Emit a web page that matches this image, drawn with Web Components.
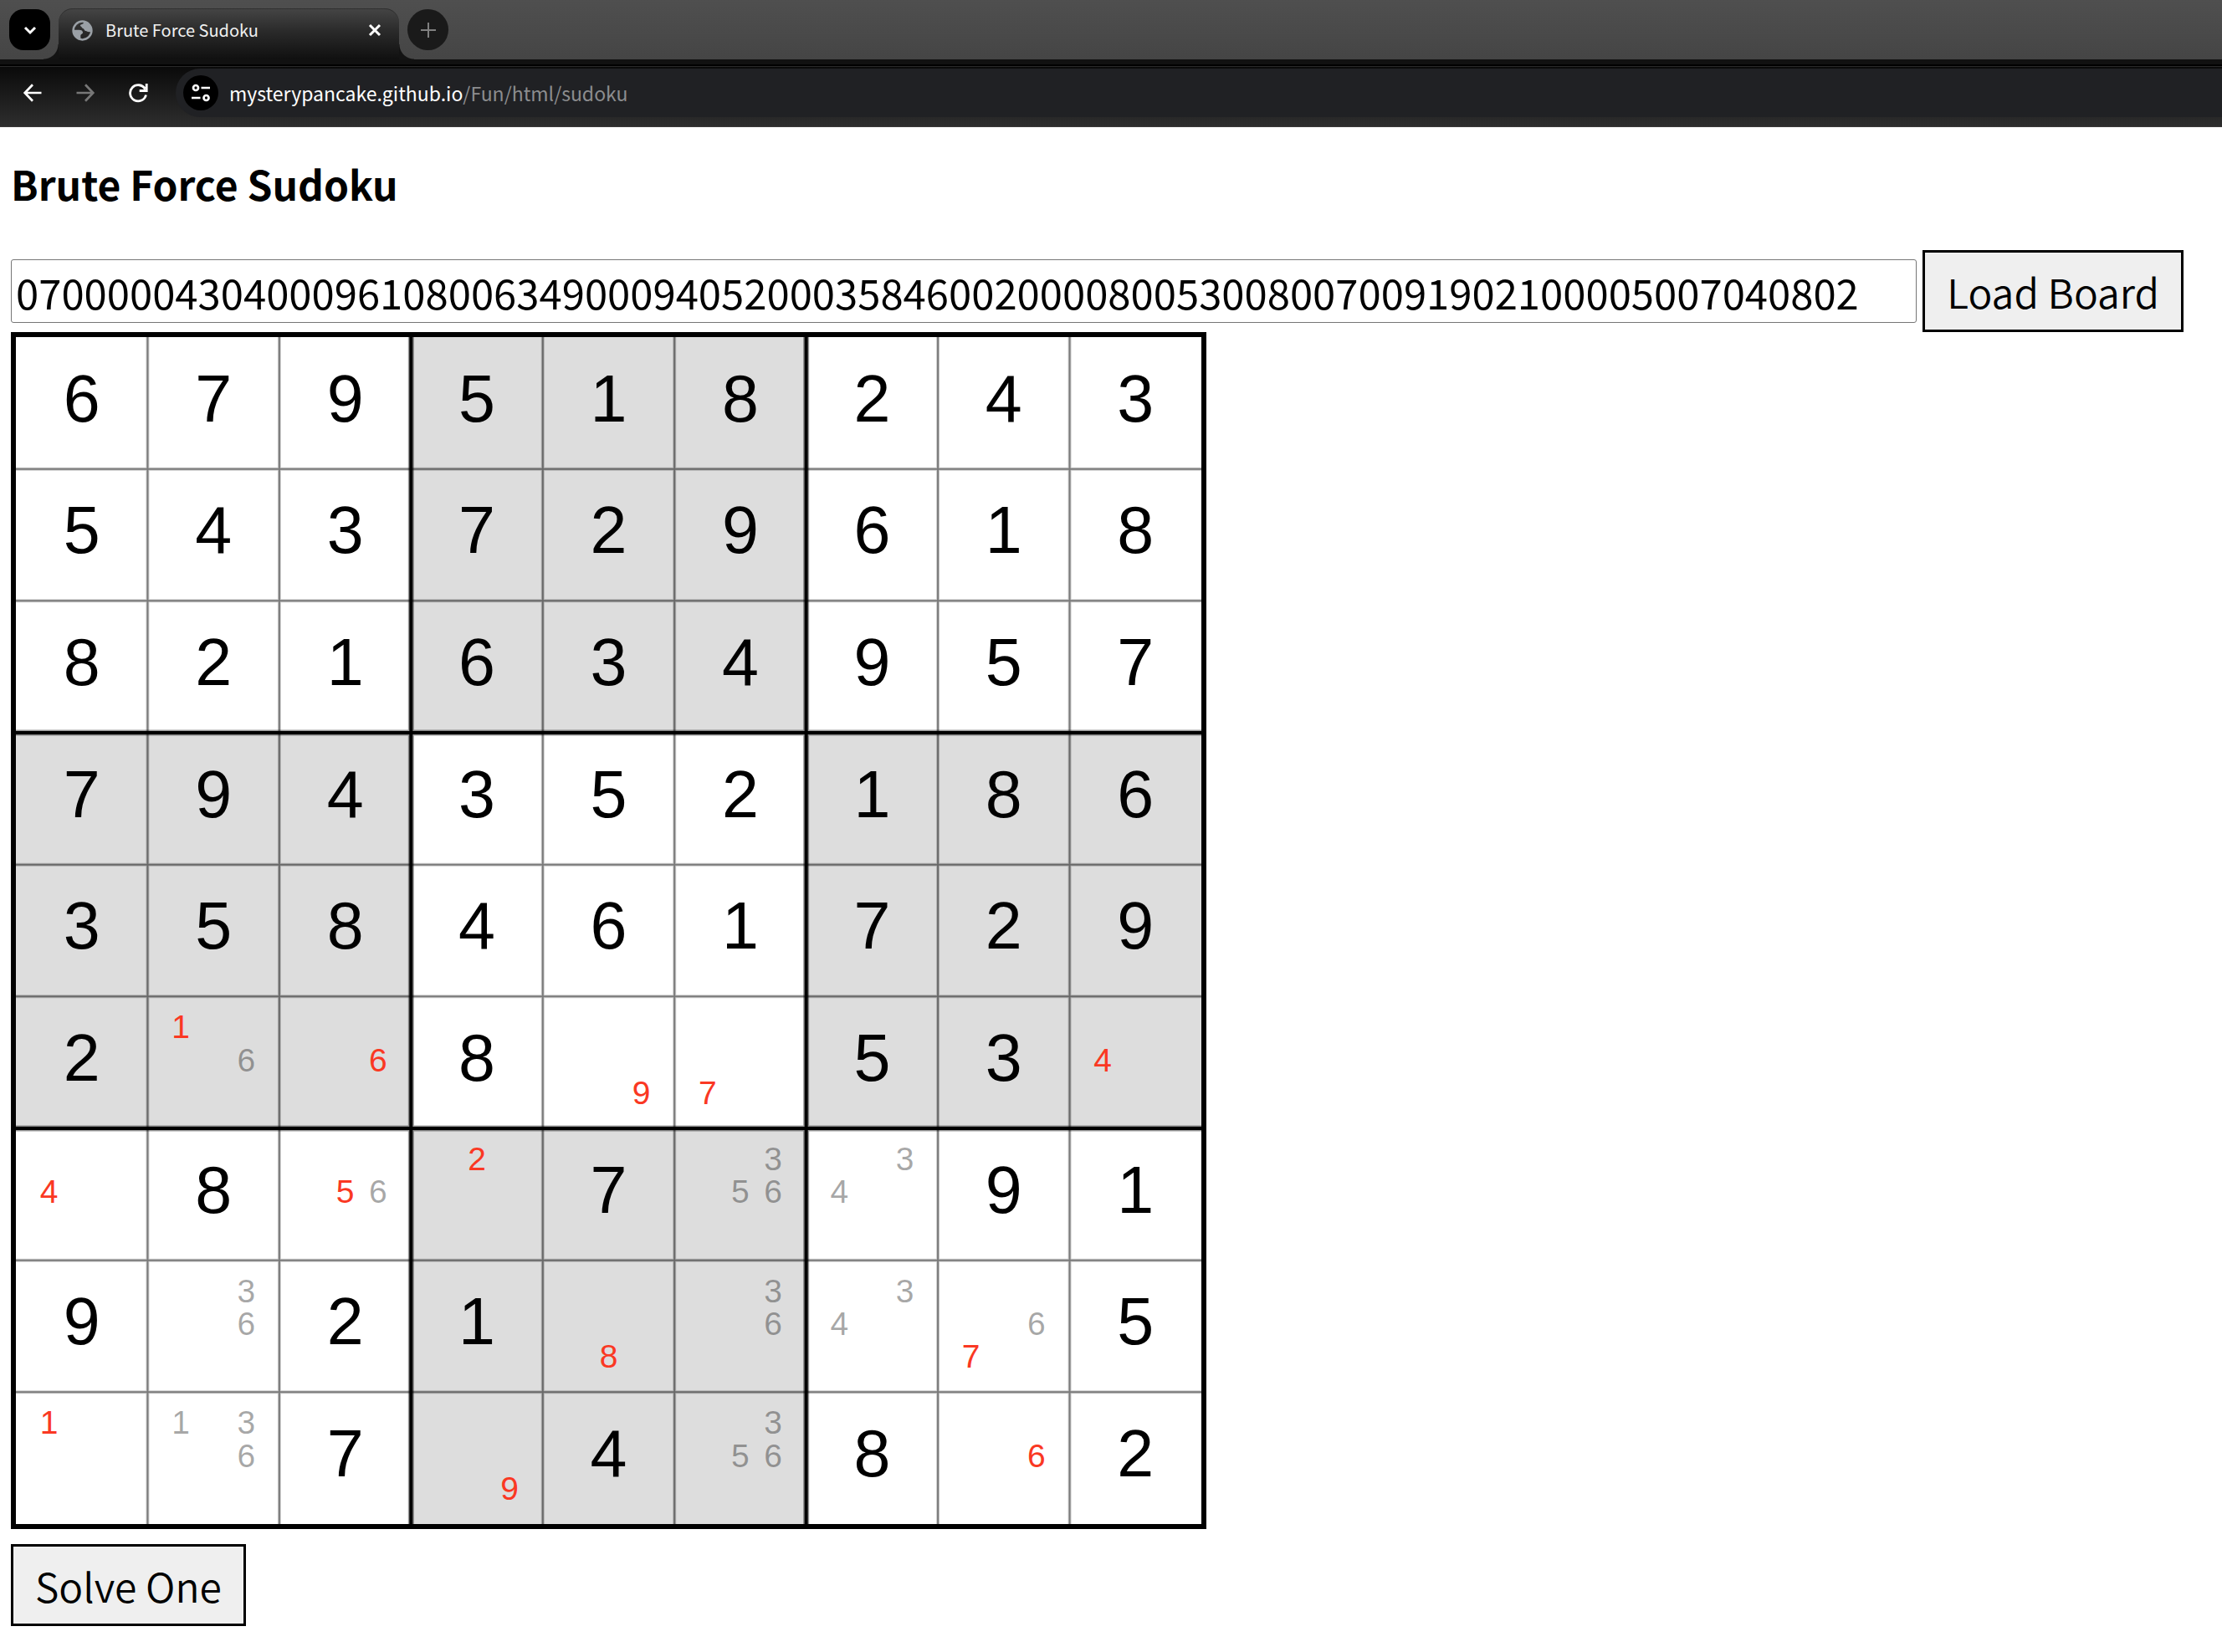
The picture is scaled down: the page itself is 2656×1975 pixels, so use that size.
<!DOCTYPE html>
<html lang="en">
<head>
<meta charset="utf-8">
<title>Brute Force Sudoku</title>
<style>
body{margin:0;background:#fff;color:#000;font-family:"Noto Sans CJK JP","Noto Sans",sans-serif}
</style>
</head>
<body>
<browser-tabs><browser-tab>Brute Force Sudoku</browser-tab></browser-tabs>
<browser-toolbar><span slot="host">mysterypancake.github.io</span><span slot="path">/Fun/html/sudoku</span></browser-toolbar>
<sudoku-app></sudoku-app>

<script>
class Base extends HTMLElement {
  constructor() {
    super();
    this.attachShadow({ mode: "open" }).innerHTML =
      `<style>:host,*,::before,::after{box-sizing:border-box}button{font:inherit;color:inherit;margin:0}svg{display:block}${this.constructor.css}</style>${this.constructor.html}`;
  }
}

class BrowserTabs extends Base {
  static css = `
    :host{display:flex;align-items:flex-start;height:71px;padding:10px 11px 0;background:linear-gradient(#4f4f4f,#454545)}
    button{display:grid;place-items:center;width:49px;height:49px;border:0;padding:0;margin-top:1px;border-radius:17px;background:#000;color:#fff}
    .new{border-radius:50%;background:#1a1a1a;color:#808080}
    ::slotted(browser-tab){margin:0 10px}`;
  static html = `
    <button aria-label="Search tabs"><svg width="20" height="20" fill="none" stroke="currentColor" stroke-width="3"><path d="M4 7l6 6 6-6"/></svg></button>
    <slot></slot>
    <button class="new" aria-label="New tab"><svg width="20" height="20" fill="none" stroke="currentColor" stroke-width="2"><path d="M10 1v18M1 10h18"/></svg></button>`;
}

class BrowserTab extends Base {
  static css = `
    :host{display:flex;align-items:center;position:relative;width:407px;height:61px;padding:0 17px 9px 16px;border-radius:17px 17px 0 0;
      background:linear-gradient(#454545,#2a2a2a 45%,#101010);box-shadow:inset 0 1px #303030;color:#f0f0f0;font-size:20px;line-height:30px}
    :host::before,:host::after{content:"";position:absolute;bottom:0;width:18px;height:18px}
    :host::before{right:100%;background:radial-gradient(circle at 0 0,transparent 17px,#131313 18px)}
    :host::after{left:100%;background:radial-gradient(circle at 100% 0,transparent 17px,#131313 18px)}
    .title{flex:1;margin-left:15px;white-space:nowrap}
    button{display:grid;place-items:center;width:24px;height:24px;border:0;padding:0;background:none;color:#fff}`;
  static html = `
    <svg width="25" height="25" viewBox="0 0 24 24" fill="#9aa0a6"><circle cx="12" cy="12" r="10.5" fill="none" stroke="#9aa0a6" stroke-width="2.4"/><path d="M13.500 1.500c.2 2.300-.6 3.200-2.700 3.500-1.600.3-1.600 1.600-.6 2.200 1.300.8 1 1.900 2.400 2.300 1.900.5 1.400 2.800 3.400 3 1.500.2 1.500 1.500 6 1A10.500 10.500 0 0 0 13.500 1.500zM1.500 11.200h6.500c3 0 4.500 1.100 4.500 3.300 0 1.500-2.600 1.500-2.600 3.500v4.600A10.500 10.500 0 0 1 1.500 11.200z"/></svg>
    <span class="title"><slot></slot></span>
    <button aria-label="Close tab"><svg width="16" height="16" fill="none" stroke="currentColor" stroke-width="3"><path d="M2 2l12 12M14 2L2 14"/></svg></button>`;
}

class BrowserToolbar extends Base {
  static css = `
    :host{display:flex;align-items:flex-end;height:81px;padding:0 0 12px 18px;overflow:hidden;
      background:linear-gradient(#111 0 6px,#000 6px 8px,#2a2a2a 8px 9px,#0a0a0a 9px,#2e2e2e 80px,#3a3838 80px)}
    nav{display:flex;gap:21px;margin:0 24px 0 0}
    nav button{display:grid;place-items:center;width:42px;height:58px;border:0;padding:0;background:none;color:#fff}
    nav button[disabled]{color:#777}
    .bar{flex:1;display:flex;align-items:center;gap:13px;height:58px;padding-left:9px;border-radius:29px 0 0 29px;background:#202124;
      color:#fff;font-size:23px;line-height:34px;white-space:nowrap}
    .bar button{display:grid;place-items:center;width:42px;height:42px;border:0;padding:0;border-radius:50%;background:#000;color:#fff}
    .path{color:#8c8d8f}`;
  static html = `
    <nav>
      <button aria-label="Back"><svg width="24" height="24" fill="none" stroke="currentColor" stroke-width="2.700"><path d="M22.500 12H3M12 2.200L2.700 12l9.300 9.800"/></svg></button>
      <button disabled aria-label="Forward"><svg width="24" height="24" fill="none" stroke="currentColor" stroke-width="2.700"><path d="M1.500 12H21M12 2.200l9.300 9.800L12 21.800"/></svg></button>
      <button aria-label="Reload"><svg width="24" height="24" fill="none" stroke="currentColor" stroke-width="2.800"><path d="M21.500 14.500A9.600 9.600 0 1 1 20.500 7.500M22.200 1v8.500h-8.500"/></svg></button>
    </nav>
    <div class="bar">
      <button aria-label="View site information"><svg width="24" height="24" fill="none" stroke="currentColor" stroke-width="2.700"><circle cx="6" cy="6" r="3"/><path d="M12.500 6H23M1 18h10.500"/><circle cx="18.500" cy="18" r="3"/></svg></button>
      <span><slot name="host"></slot><span class="path"><slot name="path"></slot></span></span>
    </div>`;
}

class PushButton extends Base {
  static css = `
    :host{display:inline-flex}
    button{height:98px;padding:0 26px;border:3px solid #000;background:#efefef;color:#000;font-size:48px;font-weight:350;line-height:70px;white-space:nowrap}`;
  static html = `<button><slot></slot></button>`;
}

class SudokuCell extends Base {
  static css = `
    :host{display:grid;min-width:0;min-height:0;font-family:"Liberation Sans",Arial,sans-serif;overflow:hidden}
    :host([shaded]){background:#ddd}
    .value{place-self:center;padding-bottom:10px;font-size:79px;line-height:92px}
    .notes{display:grid;grid-template:repeat(3,minmax(0,1fr))/repeat(3,minmax(0,1fr));padding:17px 20px 23px;font-size:39px;line-height:39px;color:rgba(0,0,0,.35)}
    .notes span{display:grid;place-items:center}
    .notes .single{color:#fa3823}`;
  static html = `<div></div>`;
  connectedCallback() {
    const box = this.shadowRoot.querySelector("div");
    const value = this.getAttribute("value");
    if (value) {
      box.className = "value";
      box.textContent = value;
      return;
    }
    box.className = "notes";
    for (const note of this.getAttribute("notes").split(" ")) {
      const n = parseInt(note, 10);
      const el = document.createElement("span");
      el.textContent = n;
      if (note.endsWith("!")) el.className = "single";
      el.style.gridArea = `${Math.ceil(n / 3)} / ${(n - 1) % 3 + 1}`;
      box.append(el);
    }
  }
}

/* Rows are comma separated; parentheses hold pencil notes, "!" marks the ones that can be placed. */
const BOARD = [
  "6,7,9,5,1,8,2,4,3",
  "5,4,3,7,2,9,6,1,8",
  "8,2,1,6,3,4,9,5,7",
  "7,9,4,3,5,2,1,8,6",
  "3,5,8,4,6,1,7,2,9",
  "2,(1! 6),(6!),8,(9!),(7!),5,3,(4!)",
  "(4!),8,(5! 6),(2!),7,(3 5 6),(3 4),9,1",
  "9,(3 6),2,1,(8!),(3 6),(3 4),(6 7!),5",
  "(1!),(1 3 6),7,(9!),4,(3 5 6),8,(6!),2"
];

class SudokuBoard extends Base {
  static css = `
    :host{display:grid;width:1429px;aspect-ratio:1429/1431;border:6px solid #000}
    .cells,svg{grid-area:1/1;width:100%;height:100%;min-height:0}
    .cells{display:grid;grid-template:repeat(9,minmax(0,1fr))/repeat(9,minmax(0,1fr))}
    path{fill:none;stroke:#000;vector-effect:non-scaling-stroke}`;
  static html = `<div class="cells"></div>
    <svg viewBox="0 0 9 9" preserveAspectRatio="none" aria-hidden="true">
      <path class="thin" stroke-width="4" stroke-opacity=".2"/><path class="thin" stroke-width="2" stroke-opacity=".4"/>
      <path class="thick" stroke-width="7" stroke-opacity=".4"/><path class="thick" stroke-width="4"/>
    </svg>`;
  connectedCallback() {
    const root = this.shadowRoot;
    const lines = list => list.map(i => `M${i} 0V9M0 ${i}H9`).join("");
    root.querySelectorAll(".thin").forEach(p => p.setAttribute("d", lines([1, 2, 4, 5, 7, 8])));
    root.querySelectorAll(".thick").forEach(p => p.setAttribute("d", lines([3, 6])));
    BOARD.forEach((row, r) => row.split(",").forEach((text, c) => {
      const cell = document.createElement("sudoku-cell");
      if (text[0] === "(") cell.setAttribute("notes", text.slice(1, -1));
      else cell.setAttribute("value", text);
      if ((Math.floor(r / 3) + Math.floor(c / 3)) % 2) cell.setAttribute("shaded", "");
      root.querySelector(".cells").append(cell);
    }));
  }
}

class SudokuApp extends Base {
  static css = `
    :host{display:block;padding:32px 13px 30px}
    h1{margin:0 0 45px;font-size:48px;line-height:70px;font-weight:700}
    form{display:flex;align-items:center;gap:7px;padding-right:33px}
    input{flex:1;min-width:0;height:76px;padding:0 5px;border:1px solid #767676;border-radius:3px;background:#fff;color:#000;font:49px/70px "Noto Sans CJK JP","Noto Sans",sans-serif}
    .actions{display:flex;margin-top:18px}`;
  static html = `
    <h1>Brute Force Sudoku</h1>
    <form onsubmit="return false">
      <input aria-label="Board" value="070000043040009610800634900094052000358460020000800530080070091902100005007040802">
      <push-button>Load Board</push-button>
    </form>
    <sudoku-board></sudoku-board>
    <div class="actions"><push-button>Solve One</push-button></div>`;
}

customElements.define("browser-tabs", BrowserTabs);
customElements.define("browser-tab", BrowserTab);
customElements.define("browser-toolbar", BrowserToolbar);
customElements.define("push-button", PushButton);
customElements.define("sudoku-cell", SudokuCell);
customElements.define("sudoku-board", SudokuBoard);
customElements.define("sudoku-app", SudokuApp);
</script>
</body>
</html>
